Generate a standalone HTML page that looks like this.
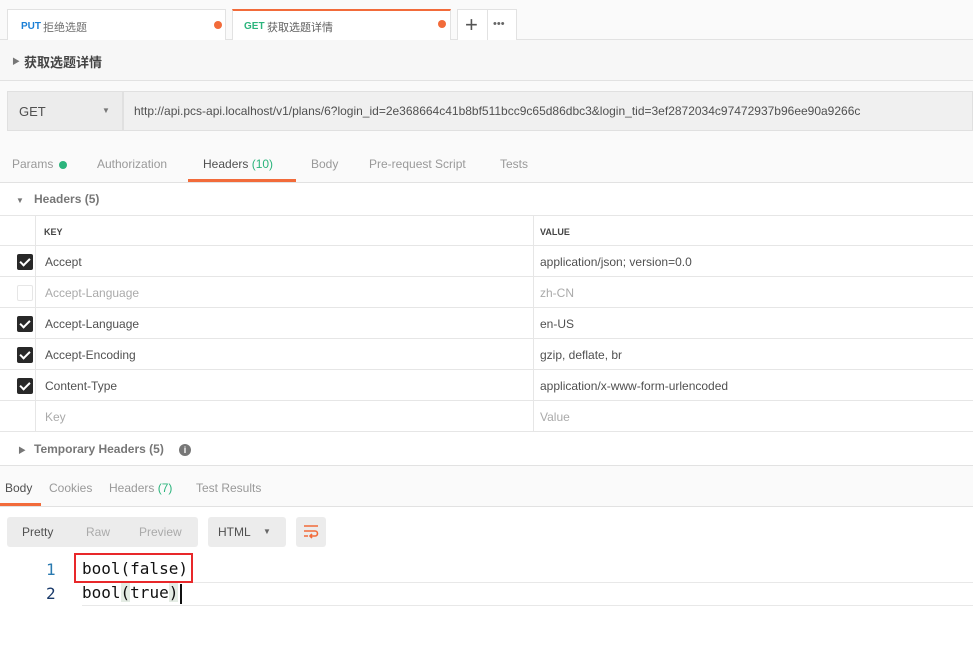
<!DOCTYPE html>
<html><head><meta charset="utf-8"><style>
*{box-sizing:border-box;margin:0;padding:0}
body{width:973px;height:651px;background:#fafafa;font-family:"Liberation Sans","Noto Sans CJK SC",sans-serif;font-size:12px;color:#505050;position:relative;overflow:hidden}
.a{position:absolute}
.tab{position:absolute;top:9px;height:31px;background:#fff;border:1px solid #e2e2e2;border-bottom:none}
.dot{position:absolute;width:8px;height:8px;border-radius:50%;background:#f26b3a}
.tx{position:absolute;white-space:nowrap}
.row{position:absolute;left:0;width:973px;height:31px;border-bottom:1px solid #e6e6e6;background:#fff}
.cb{position:absolute;left:17px;top:8px;width:16px;height:16px;background:#282828;border-radius:2px}
.cb:after{content:"";position:absolute;left:5px;top:2px;width:4px;height:8px;border:solid #fff;border-width:0 2px 2px 0;transform:rotate(45deg)}
.cbe{position:absolute;left:17px;top:8px;width:16px;height:16px;border:1px solid #e6e6e6;border-radius:2px;background:#fff}
.k{position:absolute;left:45px;top:9px}
.v{position:absolute;left:540px;top:9px}
.vl{position:absolute;left:533px;top:0;width:1px;height:31px;background:#e6e6e6}
.cl{position:absolute;left:35px;top:0;width:1px;height:31px;background:#e6e6e6}
.mono{font-family:'DejaVu Sans Mono',monospace;font-size:16px}
</style></head><body>
<div class="a" style="left:0;top:39px;width:973px;height:1px;background:#e2e2e2"></div>
<div class="tab" style="left:7px;width:219px"><span class="tx" style="left:13px;top:11px;font-size:10px;font-weight:bold;color:#1a7fd6">PUT</span><span class="tx" style="left:35px;top:9px;font-size:11px;color:#707070">拒绝选题</span><div class="dot" style="left:206px;top:11px"></div></div>
<div class="tab" style="left:232px;width:219px;border-top:2px solid #f26b3a"><span class="tx" style="left:11px;top:10px;font-size:10px;font-weight:bold;color:#2bb47c">GET</span><span class="tx" style="left:34px;top:8px;font-size:11px;color:#606060">获取选题详情</span><div class="dot" style="left:205px;top:9px"></div></div>
<div class="tab" style="left:457px;width:60px"><span class="tx" style="left:7px;top:2px;font-size:22px;color:#555;font-weight:300">+</span><div class="a" style="left:29px;top:0;width:1px;height:30px;background:#e2e2e2"></div><span class="tx" style="left:35px;top:8px;font-size:11px;color:#666;letter-spacing:0px">•••</span></div>
<div class="a" style="left:0;top:40px;width:973px;height:41px;background:#f7f7f7;border-bottom:1px solid #e2e2e2"></div>
<span class="tx" style="left:12px;top:56px;font-size:8px;color:#777">▶</span>
<span class="tx" style="left:24px;top:52px;font-size:13px;font-weight:bold;color:#444">获取选题详情</span>
<div class="a" style="left:7px;top:91px;width:116px;height:40px;background:#ececec;border:1px solid #e0e0e0"></div>
<span class="tx" style="left:19px;top:104px;font-size:13px;color:#505050">GET</span>
<span class="tx" style="left:102px;top:106px;font-size:8px;color:#777">▼</span>
<div class="a" style="left:123px;top:91px;width:850px;height:40px;background:#f0f0f0;border:1px solid #e0e0e0"></div>
<span class="tx" style="left:134px;top:104px;font-size:12px;color:#505050">http://api.pcs-api.localhost/v1/plans/6?login_id=2e368664c41b8bf511bcc9c65d86dbc3&amp;login_tid=3ef2872034c97472937b96ee90a9266c</span>
<div class="a" style="left:0;top:182px;width:973px;height:1px;background:#e2e2e2"></div>
<span class="tx" style="left:12px;top:157px;font-size:12px;color:#999">Params</span><div class="dot" style="left:59px;top:161px;background:#2bb47c"></div>
<span class="tx" style="left:97px;top:157px;color:#999">Authorization</span>
<span class="tx" style="left:203px;top:157px;color:#505050">Headers <span style="color:#2bb47c">(10)</span></span>
<div class="a" style="left:188px;top:179px;width:108px;height:3px;background:#f26b3a"></div>
<span class="tx" style="left:311px;top:157px;color:#999">Body</span>
<span class="tx" style="left:369px;top:157px;color:#999">Pre-request Script</span>
<span class="tx" style="left:500px;top:157px;color:#999">Tests</span>
<div class="a" style="left:0;top:183px;width:973px;height:283px;background:#fff"></div>
<span class="tx" style="left:16px;top:196px;font-size:8px;color:#777">▼</span>
<span class="tx" style="left:34px;top:192px;color:#777;font-weight:bold">Headers (5)</span>
<div class="row" style="top:215px;border-top:1px solid #e6e6e6"><div class="cl"></div><div class="vl"></div><span class="k" style="font-size:9px;top:11px;left:44px;color:#444;font-weight:bold">KEY</span><span class="v" style="font-size:9px;top:11px;left:540px;color:#444;font-weight:bold">VALUE</span></div>
<div class="row" style="top:246px"><div class="cl"></div><div class="vl"></div><div class="cb"></div><span class="k">Accept</span><span class="v">application/json; version=0.0</span></div>
<div class="row" style="top:277px"><div class="cl"></div><div class="vl"></div><div class="cbe"></div><span class="k" style="color:#aaa">Accept-Language</span><span class="v" style="color:#aaa">zh-CN</span></div>
<div class="row" style="top:308px"><div class="cl"></div><div class="vl"></div><div class="cb"></div><span class="k">Accept-Language</span><span class="v">en-US</span></div>
<div class="row" style="top:339px"><div class="cl"></div><div class="vl"></div><div class="cb"></div><span class="k">Accept-Encoding</span><span class="v">gzip, deflate, br</span></div>
<div class="row" style="top:370px"><div class="cl"></div><div class="vl"></div><div class="cb"></div><span class="k">Content-Type</span><span class="v">application/x-www-form-urlencoded</span></div>
<div class="row" style="top:401px"><div class="cl"></div><div class="vl"></div><span class="k" style="color:#aaa">Key</span><span class="v" style="color:#aaa">Value</span></div>
<span class="tx" style="left:18px;top:445px;font-size:8px;color:#777">▶</span>
<span class="tx" style="left:34px;top:442px;color:#777;font-weight:bold">Temporary Headers (5)</span>
<div class="a" style="left:179px;top:444px;width:12px;height:12px;border-radius:50%;background:#777;color:#fff;font-size:9px;font-weight:bold;text-align:center;line-height:12px">i</div>
<div class="a" style="left:0;top:465px;width:973px;height:1px;background:#e2e2e2"></div>
<div class="a" style="left:0;top:506px;width:973px;height:1px;background:#e2e2e2"></div>
<span class="tx" style="left:5px;top:481px;color:#505050">Body</span>
<div class="a" style="left:0;top:503px;width:41px;height:3px;background:#f26b3a"></div>
<span class="tx" style="left:49px;top:481px;color:#999">Cookies</span>
<span class="tx" style="left:109px;top:481px;color:#999">Headers <span style="color:#2bb47c">(7)</span></span>
<span class="tx" style="left:196px;top:481px;color:#999">Test Results</span>
<div class="a" style="left:0;top:507px;width:973px;height:144px;background:#fff"></div>
<div class="a" style="left:7px;top:517px;width:191px;height:30px;background:#ececec;border-radius:3px"></div>
<span class="tx" style="left:22px;top:525px;color:#505050">Pretty</span>
<span class="tx" style="left:86px;top:525px;color:#aaa">Raw</span>
<span class="tx" style="left:139px;top:525px;color:#aaa">Preview</span>
<div class="a" style="left:208px;top:517px;width:78px;height:30px;background:#ececec;border-radius:3px"></div>
<span class="tx" style="left:218px;top:525px;color:#505050">HTML</span>
<span class="tx" style="left:263px;top:527px;font-size:8px;color:#666">▼</span>
<div class="a" style="left:296px;top:517px;width:30px;height:30px;background:#ececec;border-radius:3px"></div>
<svg class="a" style="left:303px;top:524px" width="16" height="16" viewBox="0 0 16 16" fill="none" stroke="#f26b3a" stroke-width="1.6"><path d="M1 2h14M1 7h11a2.5 2.5 0 0 1 0 5H7M1 12h4M9 10l-2 2 2 2"/></svg>
<div class="a" style="left:82px;top:582px;width:891px;height:1px;background:#e8e8e8"></div>
<div class="a" style="left:82px;top:605px;width:891px;height:1px;background:#e8e8e8"></div>
<div class="a" style="left:74px;top:553px;width:119px;height:30px;border:2px solid #e8282a"></div>
<span class="tx mono" style="left:46px;top:560px;color:#2a7ab0">1</span>
<span class="tx mono" style="left:46px;top:584px;color:#1a3a6a">2</span>
<span class="tx mono" style="left:82px;top:559px;color:#111">bool(false)</span>
<span class="tx mono" style="left:82px;top:583px;color:#111">bool<span style="background:#e4ece4">(</span>true<span style="background:#e4ece4">)</span></span>
<div class="a" style="left:180px;top:584px;width:2px;height:20px;background:#111"></div>
</body></html>
